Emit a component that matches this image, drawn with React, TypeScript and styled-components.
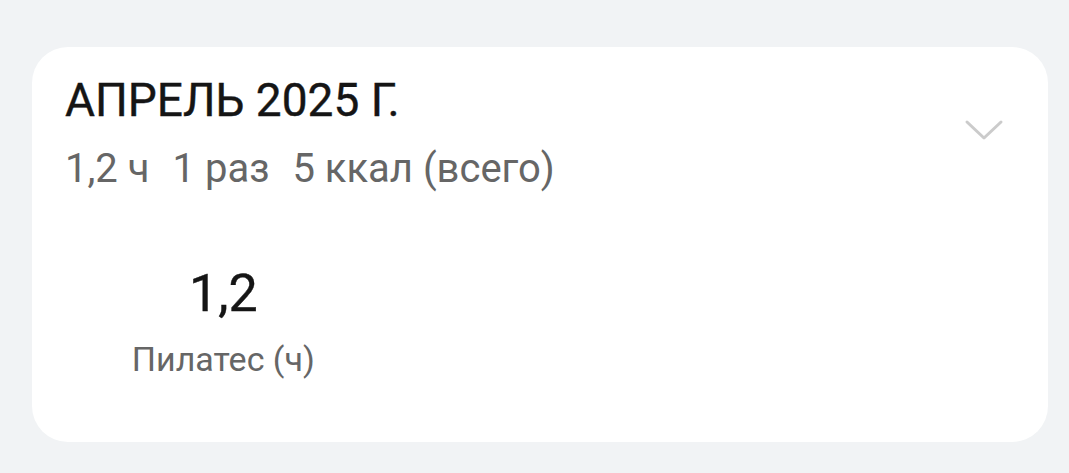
import styled, { createGlobalStyle } from "styled-components";

const GlobalStyle = createGlobalStyle`
  html, body {
    margin: 0;
    padding: 0;
    background: #f1f3f5;
    font-family: Roboto, "Noto Sans", sans-serif;
  }
`;

const Page = styled.div`
  width: 1069px;
  height: 473px;
  box-sizing: border-box;
  padding: 47px 21px 0 32px;
`;

const Card = styled.section`
  background: #ffffff;
  border-radius: 36px;
  box-sizing: border-box;
  height: 395px;
  padding: 26px 33px 0 33px;
`;

const Header = styled.div`
  display: flex;
  align-items: center;
  justify-content: space-between;
`;

const HeaderText = styled.div`
  display: flex;
  flex-direction: column;
  gap: 17px;
`;

const Title = styled.h2`
  margin: 0;
  font-size: 46px;
  line-height: 1.2;
  font-weight: 400;
  color: #151515;
  -webkit-text-stroke: 0.4px #151515;
`;

const Summary = styled.div`
  display: flex;
  gap: 23px;
  font-size: 40px;
  line-height: 1.2;
  color: #666666;
`;

const Chevron = styled.svg`
  width: 40px;
  height: 24px;
  margin-right: 11px;
  margin-top: -6px;
`;

const Stats = styled.div`
  display: grid;
  grid-template-columns: repeat(3, 1fr);
  margin-top: 70px;
`;

const Stat = styled.div`
  display: flex;
  flex-direction: column;
  align-items: center;
  gap: 13px;
`;

const StatValue = styled.div`
  font-size: 52px;
  line-height: 1.2;
  font-weight: 400;
  color: #151515;
  -webkit-text-stroke: 0.4px #151515;
`;

const StatLabel = styled.div`
  font-size: 34px;
  line-height: 1.2;
  color: #666666;
`;

export default function App() {
  return (
    <>
      <GlobalStyle />
      <Page>
        <Card>
          <Header>
            <HeaderText>
              <Title>АПРЕЛЬ 2025 Г.</Title>
              <Summary>
                <span>1,2 ч</span>
                <span>1 раз</span>
                <span>5 ккал (всего)</span>
              </Summary>
            </HeaderText>
            <Chevron viewBox="0 0 40 24">
              <polyline
                points="3,4 20,20 37,4"
                fill="none"
                stroke="#cbcbcb"
                strokeWidth="3"
                strokeLinecap="round"
                strokeLinejoin="round"
              />
            </Chevron>
          </Header>
          <Stats>
            <Stat>
              <StatValue>1,2</StatValue>
              <StatLabel>Пилатес (ч)</StatLabel>
            </Stat>
          </Stats>
        </Card>
      </Page>
    </>
  );
}
